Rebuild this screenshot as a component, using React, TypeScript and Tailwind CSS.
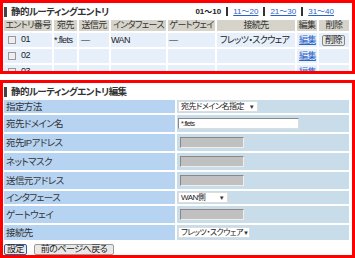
import React from "react";

const font = "[font-family:'Liberation_Sans','Noto_Sans_CJK_JP',sans-serif] [font-feature-settings:'palt']";

function Title({ text }: { text: string }) {
  return (
    <div className="flex items-center h-[17px] pl-[1px]">
      <div className="w-[3px] h-[10px] bg-[#444]" />
      <span className="ml-[4px] text-[9.5px] tracking-[-0.6px] font-bold text-[#333] leading-none whitespace-nowrap">{text}</span>
    </div>
  );
}

function Check() {
  return <span className="inline-block w-[8px] h-[8px] border border-[#999] bg-[#eee] mr-[5px] align-middle" />;
}

function Sel({ text, w }: { text: string; w: string }) {
  return (
    <div className={`${w} h-[11px] bg-white border border-[#ddd] flex items-center justify-between pl-[2px] pr-[3px]`}>
      <span className="text-[8px] tracking-[-0.5px] leading-none text-[#222] whitespace-nowrap">{text}</span>
      <span className="text-[6px] leading-none text-[#333]">▼</span>
    </div>
  );
}

function Inp({ text }: { text?: string }) {
  if (text !== undefined)
    return (
      <div className="w-[121px] h-[11px] bg-white border border-t-[#888] border-l-[#888] border-b-[#ddd] border-r-[#ddd] flex items-center pl-[2px]">
        <span className="text-[7px] leading-none text-[#222]">{text}</span>
      </div>
    );
  return <div className="ml-[2px] w-[64px] h-[11px] bg-[#c0c0c0] border border-t-[#888] border-l-[#888] border-b-[#eee] border-r-[#eee]" />;
}

export default function App() {
  const head = ["エントリ番号", "宛先", "送信元", "インタフェース", "ゲートウェイ", "接続先", "編集", "削除"];
  const widths = ["w-[48px]", "w-[23px]", "w-[30px]", "w-[55px]", "w-[47px]", "w-[78px]", "w-[20px]", "w-[30px]"];
  const rows: { k: string; h: string; v: React.ReactNode }[] = [
    { k: "指定方法", h: "h-[13px]", v: <Sel text="宛先ドメイン名指定" w="w-[80px]" /> },
    { k: "宛先ドメイン名", h: "h-[17px]", v: <Inp text="*.flets" /> },
    { k: "宛先IPアドレス", h: "h-[17px]", v: <Inp /> },
    { k: "ネットマスク", h: "h-[17px]", v: <Inp /> },
    { k: "送信元アドレス", h: "h-[17px]", v: <Inp /> },
    { k: "インタフェース", h: "h-[13px]", v: <Sel text="WAN側" w="w-[50px]" /> },
    { k: "ゲートウェイ", h: "h-[17px]", v: <Inp /> },
    { k: "接続先", h: "h-[15px]", v: <Sel text="フレッツ・スクウェア" w="w-[72px]" /> },
  ];
  const cell = "p-0 bg-[#e6effa] whitespace-nowrap overflow-hidden";
  return (
    <div className={`w-[355px] h-[258px] bg-white ${font} text-[#222]`}>
      <div className="h-[74px] border-[3px] border-[#ff0000] overflow-hidden">
        <div className="flex items-center justify-between pr-[18px]">
          <Title text="静的ルーティングエントリ" />
          <div className="flex items-center text-[8px] leading-none gap-[5px]">
            <span className="font-bold">01〜10</span>
            <span className="w-[2px] h-[9px] bg-[#333]" />
            <span className="text-[#2a62c9] underline">11〜20</span>
            <span className="w-[2px] h-[9px] bg-[#333]" />
            <span className="text-[#2a62c9] underline">21〜30</span>
            <span className="w-[2px] h-[9px] bg-[#333]" />
            <span className="text-[#2a62c9] underline">31〜40</span>
          </div>
        </div>
        <table className="table-fixed border-separate [border-spacing:2px] -ml-[1px] -mt-[2px] text-[9px] tracking-[-0.6px] leading-none">
          <colgroup>
            {widths.map((w, i) => (
              <col key={i} className={w} />
            ))}
          </colgroup>
          <thead>
            <tr>
              {head.map((h) => (
                <th key={h} className="h-[11px] p-0 bg-[#d6d3ca] font-normal text-[#333] text-center whitespace-nowrap overflow-hidden">{h}</th>
              ))}
            </tr>
          </thead>
          <tbody>
            {["01", "02", "03"].map((n, r) => (
              <tr key={n}>
                <td className={`h-[14px] pl-[4px] text-left ${cell}`}>
                  <Check />
                  <span className="align-middle">{n}</span>
                </td>
                <td className={cell}>{r === 0 ? "*.flets" : ""}</td>
                <td className={`pl-[2px] ${cell}`}>{r === 0 ? "—" : ""}</td>
                <td className={cell}>{r === 0 ? "WAN" : ""}</td>
                <td className={`pl-[1px] ${cell}`}>{r === 0 ? "—" : ""}</td>
                <td className={`pl-[3px] ${cell}`}>{r === 0 ? "フレッツ・スクウェア" : ""}</td>
                <td className={`pl-[2px] text-[#2a62c9] underline ${cell}`}>編集</td>
                <td className={`pl-[3px] ${cell}`}>
                  {r === 0 ? (
                    <span className="inline-block px-[2px] h-[11px] leading-[9px] border border-[#888] rounded-[2px] bg-[#e8e8e8]">削除</span>
                  ) : null}
                </td>
              </tr>
            ))}
          </tbody>
        </table>
      </div>
      <div className="mt-[6px] h-[178px] border-[3px] border-[#ff0000] overflow-hidden">
        <Title text="静的ルーティングエントリ編集" />
        <table className="table-fixed border-separate [border-spacing:2px] -ml-[1px] -mt-[2px] text-[9.5px] tracking-[-0.6px] leading-none">
          <colgroup>
            <col className="w-[171px]" />
            <col className="w-[172px]" />
          </colgroup>
          <tbody>
            {rows.map((r) => (
              <tr key={r.k}>
                <td className={`${r.h} p-0 pl-[2px] bg-[#b6d4f2] text-[#333] whitespace-nowrap`}>{r.k}</td>
                <td className="p-0 pl-[1px] bg-[#c9dcea] align-middle">{r.v}</td>
              </tr>
            ))}
          </tbody>
        </table>
        <div className="flex items-center gap-[7px] pl-[1px] mt-[2px] tracking-[-0.5px]">
          <span className="h-[11px] px-[2px] border border-[#345d9a] rounded-[2px] bg-[#e8e8e8] text-[9px] leading-[9px] flex items-center">設定</span>
          <span className="h-[11px] w-[80px] border border-[#999] rounded-[2px] bg-[#e8e8e8] text-[9px] leading-[9px] flex items-center justify-center">前のページへ戻る</span>
        </div>
      </div>
    </div>
  );
}
